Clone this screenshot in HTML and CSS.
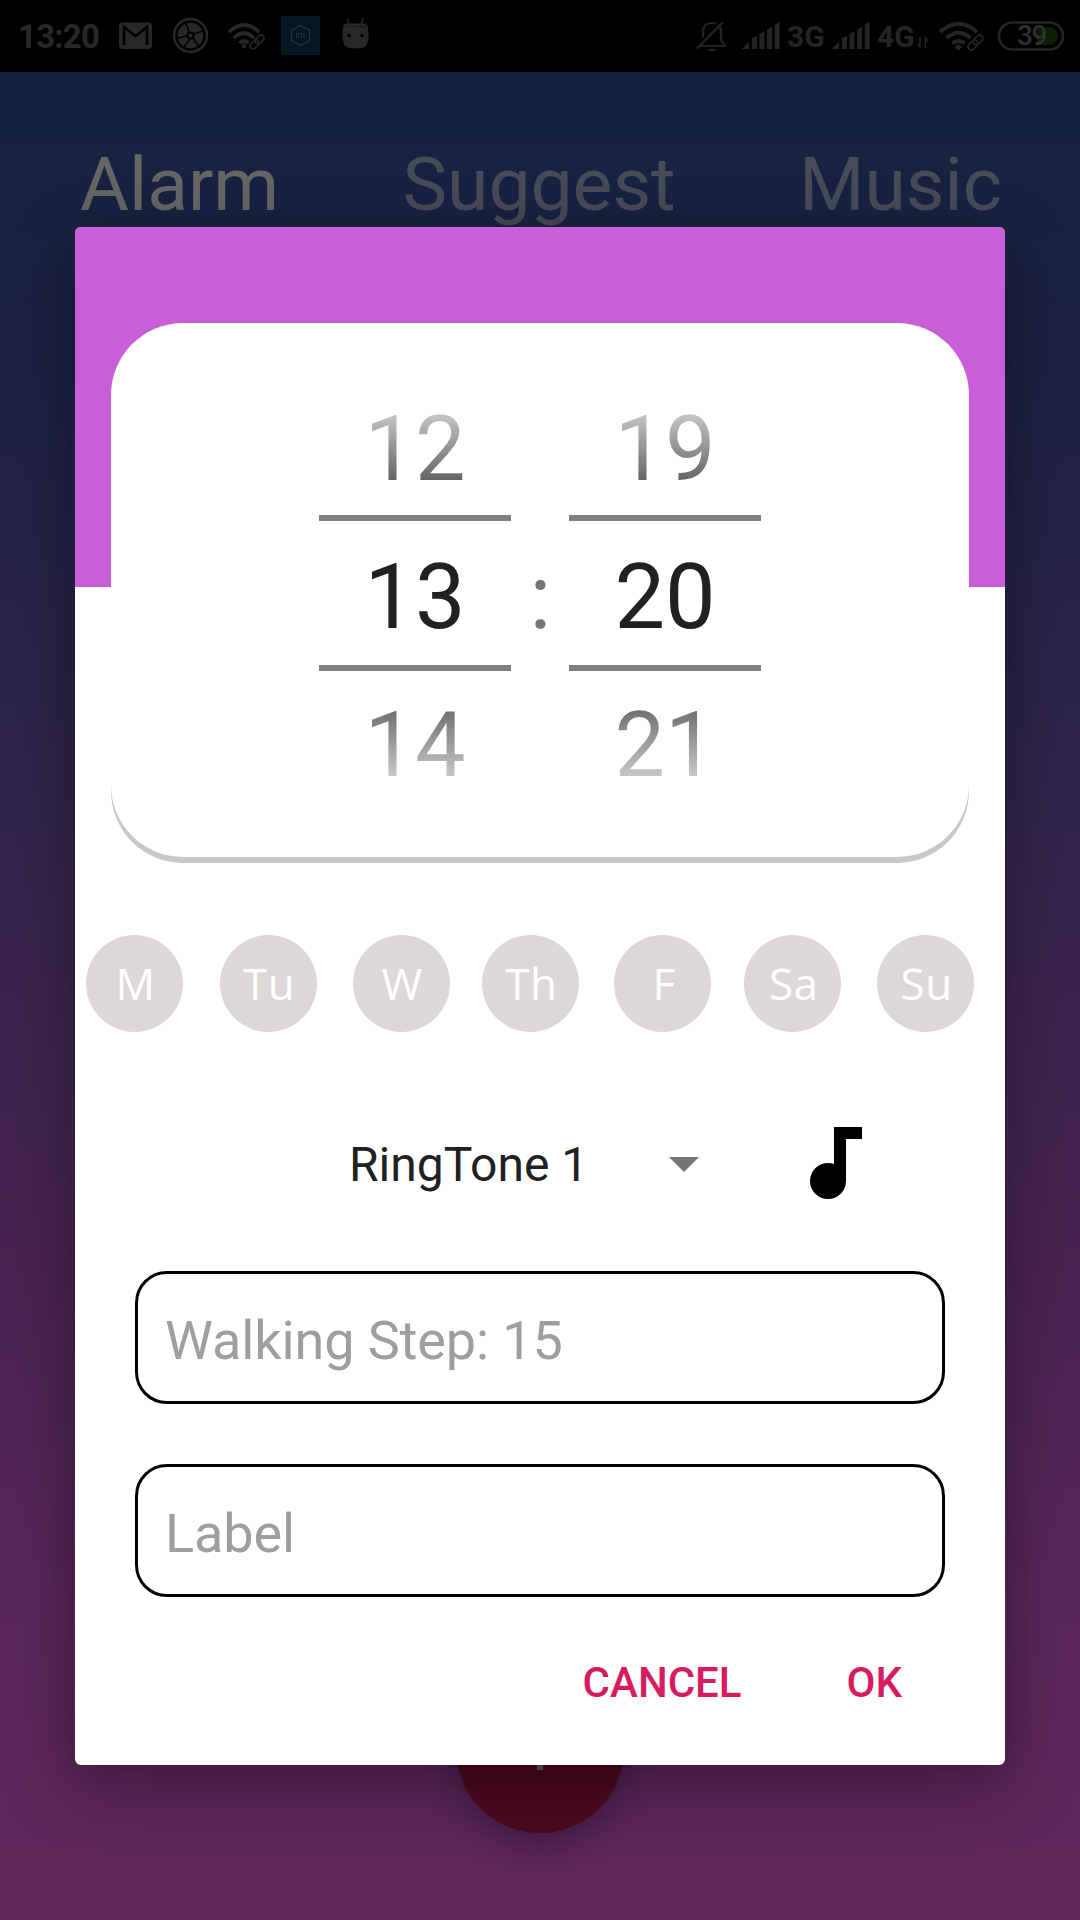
FILE: index.html
```html
<!DOCTYPE html>
<html lang="en">
<head>
<meta charset="utf-8">
<title>Alarm</title>
<link rel="stylesheet" href="styles.css">
</head>
<body>
<div class="screen">
  <header class="status">
    <span class="clock">13:20</span>
    <svg class="status-icons" width="260" height="72" viewBox="110 0 260 72">
      <rect x="119" y="22.500" width="33" height="26.500" rx="4" fill="#282828"/>
      <path d="M124 45V27L135.500 36L147 27V45" fill="none" stroke="#000" stroke-width="2.600"/>
      <circle cx="190.500" cy="35.500" r="16.500" fill="none" stroke="#282828" stroke-width="2.500"/>
      <circle cx="190.500" cy="35.500" r="12.800" fill="#282828"/>
      <path d="M189 32L186 23M194 34L203 31M193 38L199 47M190 39L184 47M187 36L178 38" stroke="#000" stroke-width="1.500"/>
      <circle cx="190.500" cy="35.500" r="3" fill="#282828" stroke="#000" stroke-width="1.800"/>
      <g fill="none" stroke="#282828" stroke-width="3.600">
        <path d="M229 32Q244 18 259 32M234 38Q244 28.500 254 38M239.500 43Q244 39 248.500 43"/>
      </g>
      <circle cx="244" cy="46" r="2.300" fill="#282828"/>
      <g fill="none" stroke="#282828" stroke-width="1.600">
        <rect x="-5" y="-3" width="10" height="6" rx="3" transform="translate(259.500 39.500) rotate(-45)"/>
        <rect x="-5" y="-3" width="10" height="6" rx="3" transform="translate(254.500 44.500) rotate(-45)"/>
      </g>
      <rect x="281" y="16" width="39" height="39" fill="#04161f"/>
      <path d="M300.500 25.500L309.500 30.500V40.500L300.500 45.500L291.500 40.500V30.500Z" fill="none" stroke="#26323a" stroke-width="1.300"/>
      <path d="M296.500 38V33.500H301.500V38M299 35V38M304 33V38" fill="none" stroke="#26323a" stroke-width="1.100"/>
      <path d="M343 28Q343 23.500 347 23.500H364Q368 23.500 368 28C369 36 368.500 42 366 46Q364 48.500 355.500 48.500T345 46C342.500 42 342 36 343 28Z" fill="#282828"/>
      <path d="M345 26.500H366" stroke="#1d1d1d" stroke-width="2"/>
      <path d="M349 25L347.500 18M361.500 25L363 18" stroke="#282828" stroke-width="1.400"/>
      <circle cx="349" cy="35.500" r="1.800" fill="#000"/><circle cx="362" cy="35.500" r="1.800" fill="#000"/>
    </svg>
    <svg class="status-right" width="390" height="72" viewBox="690 0 390 72">
      <path d="M701 46H725L721 40V32Q721 23 712 23Q703 23 703 32V40Z" fill="none" stroke="#242424" stroke-width="2.200"/>
      <path d="M699 44L720 22" stroke="#000" stroke-width="3"/>
      <path d="M697 48.500L723 22" stroke="#242424" stroke-width="2.400"/>
      <path d="M707 49H717Q712 54.500 707 49Z" fill="#242424"/>
      <path id="bars" fill="#242424" d="M741.500 49L749 42V49ZM752 49V38L757 36V49ZM759.500 49V34L764.300 31V49ZM767 49V30L772 26.500V49ZM774.700 49V25L779.500 21.500V49Z"/>
      <text x="787" y="47" class="net">3G</text>
      <use href="#bars" x="90"/>
      <text x="877" y="47" class="net">4G</text>
      <path d="M920 37V47L917.500 44M925.500 48V38L928 41" fill="none" stroke="#242424" stroke-width="1.500"/>
      <g fill="none" stroke="#242424" stroke-width="4">
        <path d="M940 32Q958.500 15.500 977 32M946.500 38Q958.500 27.500 970.500 38M952.500 43.500Q958.500 38.500 964.500 43.500"/>
      </g>
      <path d="M954.500 47L958.500 44.500L962.500 47L958.500 50.500Z" fill="#242424"/>
      <g fill="none" stroke="#242424" stroke-width="1.600">
        <rect x="-5.500" y="-3.300" width="11" height="6.600" rx="3.300" transform="translate(978 40) rotate(-45)"/>
        <rect x="-5.500" y="-3.300" width="11" height="6.600" rx="3.300" transform="translate(973 45) rotate(-45)"/>
      </g>
      <rect x="999" y="22.500" width="64" height="27" rx="13.500" fill="none" stroke="#242424" stroke-width="2.600"/>
      <path d="M1037 27H1049A9 9 0 0 1 1049 45H1037Z" fill="#0b1d04"/>
      <text x="1017" y="45" class="level">39</text>
    </svg>
  </header>
  <nav class="tabs">
    <span class="tab active">Alarm</span>
    <span class="tab">Suggest</span>
    <span class="tab">Music</span>
  </nav>
  <div class="fab"><svg width="72" height="72" viewBox="0 0 24 24"><path d="M19 13h-6v6h-2v-6H5v-2h6V5h2v6h6v2z" fill="#595959"/></svg></div>

  <main class="dialog">
    <section class="hero">
      <div class="card">
        <div class="wheel">
          <span class="fade">12</span><span class="now">13</span><span class="fade low">14</span>
        </div>
        <span class="colon">:</span>
        <div class="wheel">
          <span class="fade">19</span><span class="now">20</span><span class="fade low">21</span>
        </div>
      </div>
    </section>
    <section class="days">
      <span class="day">M</span><span class="day">Tu</span><span class="day">W</span><span class="day">Th</span><span class="day">F</span><span class="day">Sa</span><span class="day">Su</span>
    </section>
    <section class="ringtone">
      <span class="tone">RingTone 1</span>
      <svg class="caret" width="30" height="15" viewBox="0 0 30 15"><path d="M0 0H30L15 15Z" fill="#757575"/></svg>
      <svg class="note" width="52" height="72" viewBox="0 0 52 72"><circle cx="18" cy="54" r="18"/><path d="M24 0H52V12H36V54H24Z"/></svg>
    </section>
    <div class="field">Walking Step: 15</div>
    <div class="field">Label</div>
    <footer class="actions"><span>CANCEL</span><span>OK</span></footer>
  </main>
</div>
</body>
</html>
```
FILE: styles.css
```css
* { box-sizing: border-box; }
body {
  margin: 0;
  font-family: Roboto, "Liberation Sans", sans-serif;
}
.screen {
  position: relative;
  width: 1080px;
  height: 1920px;
  overflow: hidden;
  background: linear-gradient(180deg, #14233f 72px, #1f2244 420px, #30244a 800px, #482451 1250px, #59265a 1600px, #60275a 1920px);
}
.status {
  height: 72px;
  background: #000;
  display: flex;
  align-items: center;
}
.clock {
  width: 110px;
  padding-left: 18px;
  color: #282828;
  font-size: 33px;
  font-weight: 700;
  letter-spacing: -.8px;
}
.status-right { margin-left: auto; }
.net { font: 700 30px Roboto, sans-serif; fill: #242424; }
.level { font: 500 28px Roboto, sans-serif; letter-spacing: -1.500px; fill: #303030; }
.tabs {
  display: flex;
  justify-content: space-between;
  padding: 68px 78px 0 80px;
  font-size: 75px;
  line-height: 88px;
  color: #474a57;
}
.active { color: #656565; }
.fab {
  position: absolute;
  left: 456px;
  top: 1665px;
  width: 168px;
  height: 168px;
  border-radius: 50%;
  background: #4d0920;
  display: flex;
  align-items: center;
  justify-content: center;
  box-shadow: 0 12px 30px rgba(20, 15, 40, .4);
}
.dialog {
  position: absolute;
  left: 75px;
  top: 227px;
  width: 930px;
  height: 1538px;
  border-radius: 6px;
  overflow: hidden;
  background: #fff;
  box-shadow: 0 24px 72px rgba(0, 0, 0, .3), 0 0 24px rgba(0, 0, 0, .1);
}
.hero {
  padding: 96px 36px 0;
  background: linear-gradient(#c85fd7 360px, #fff 360px);
}
.card {
  height: 534px;
  border-radius: 72px;
  background: #fff;
  box-shadow: 0 6px #c8c8c8;
  display: flex;
  justify-content: center;
  padding-top: 44px;
}
.wheel {
  width: 192px;
  display: flex;
  flex-direction: column;
  text-align: center;
  font-size: 90px;
  color: #212121;
}
.wheel span { height: 148px; line-height: 148px; }
.wheel .now {
  height: 156px;
  border-top: 6px solid #808080;
  border-bottom: 6px solid #808080;
  line-height: 154px;
}
.wheel .fade {
  background: linear-gradient(#fff 7px, #212121 160px);
  background-clip: text;
  color: transparent;
  line-height: 166px;
}
.wheel .low {
  background-image: linear-gradient(#3c3c3c 0, #fff 147px);
  line-height: 150px;
}
.colon {
  width: 58px;
  text-align: center;
  font-size: 90px;
  line-height: 106px;
  padding: 178px 0 0 1px;
  color: #757575;
}
.days {
  display: grid;
  grid-template-columns: 133.500px 133px 129.400px 132.600px 129.700px 133px 97px;
  padding: 78px 0 0 11px;
}
.day {
  width: 97px;
  height: 97px;
  padding-left: 2px;
  border-radius: 50%;
  background: #ddd7d7;
  color: #fff;
  font-family: "Open Sans", "Noto Sans", sans-serif;
  font-size: 44px;
  line-height: 97px;
  text-align: center;
  letter-spacing: .5px;
}
.ringtone {
  display: flex;
  align-items: center;
  height: 72px;
  margin-top: 95px;
  padding-left: 274px;
}
.tone { width: 320px; padding-top: 2px; font-size: 48px; color: #212121; }
.caret { margin-top: 2px; }
.note { margin-left: 111px; }
.field {
  width: 810px;
  height: 133px;
  margin: 72px 0 0 60px;
  padding-left: 27px;
  border: 3px solid #000;
  border-radius: 32px;
  font-size: 54px;
  line-height: 133px;
  letter-spacing: -.1px;
  color: #9e9e9e;
}
.field + .field { margin-top: 60px; }
.actions {
  display: flex;
  justify-content: flex-end;
  gap: 105px;
  padding: 61px 103px 0 0;
  font-size: 42px;
  font-weight: 500;
  line-height: 50px;
  color: #d81b60;
}
```
